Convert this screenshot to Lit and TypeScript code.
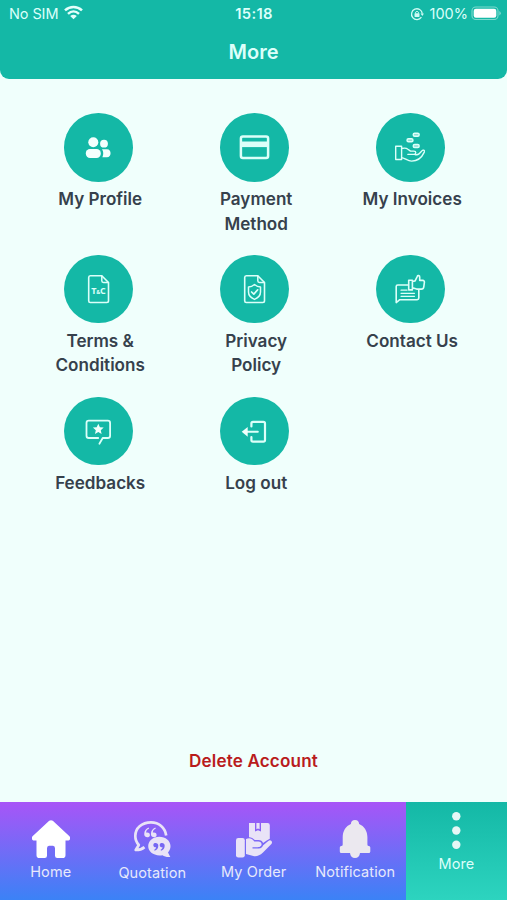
import { LitElement, html, css, svg } from "lit";
import { customElement } from "lit/decorators.js";

const profile = svg`<g fill="#f4fffd" stroke="none"><circle cx="29.3" cy="29.3" r="5"/><circle cx="40" cy="30.7" r="3.9"/><rect x="21.8" y="36" width="15" height="9" rx="4.2"/><path d="M38 36.300H43c4.800 0 4.800 8 0 8h-4.600c1.300-3 1.100-5.800-.4-8Z"/></g>`;

const card = svg`<rect x="20.900" y="23.400" width="27.200" height="21.600" rx="2" stroke-width="2.500"/><path class="band" d="M21 31.300h27" stroke-width="5.600"/>`;

const invoices = svg`<g stroke-width="1.400"><g fill="#8ce0d6"><rect x="37.200" y="20.300" width="6" height="3" rx="1.500"/><rect x="31" y="25.700" width="6" height="3" rx="1.500"/><rect x="37.200" y="31.500" width="6" height="3" rx="1.500"/></g><path d="M19.700 33.200h5.900v13.300h-5.900ZM25.600 35.500c3-.8 4.500-.8 6.300.7l2.600 1.900h3.400c2.500 0 2.500 3.200 0 3.300h-6M25.600 44.600c3 .2 6 3.500 10 3.500 6 0 10-3.200 12.700-9 .7-1.900-1.300-2.600-2.500-1.200l-2.900 3c-1.500 1.300-3 .8-4.300.5"/></g>`;

const sheet = svg`<path d="M26.300 20.700h11.500l6.700 6.800v18.300q0 1.700-1.700 1.700H26.300q-1.600 0-1.600-1.700V22.400q0-1.700 1.600-1.700Z" stroke-width="1.600"/><path d="M37.800 20.900v4.800q0 1.700 1.700 1.700h4.800" stroke-width="1.500"/>`;

const terms = svg`${sheet}<g><text x="27.200" y="39.200">T</text><text x="32.300" y="39.200" class="amp">&amp;</text><text x="36" y="39.200">C</text></g>`;

const privacy = svg`${sheet}<path d="M34.500 29.500q2.800 2.400 6 2.400v5.200q0 4.900-6 7.300-6-2.400-6-7.300v-5.200q3.200 0 6-2.400Z" stroke-width="1.500"/><path d="m31.600 37 2.200 2.100 3.900-4.300" stroke-width="1.700"/>`;

const contact = svg`<path d="M32 30H21.800q-1.600 0-1.600 1.600v16l3.600-2.900h17.400q1.600 0 1.600-1.600v-8" stroke-width="1.600"/><path d="M25 35.200h6M25 38.300h13.500M25 41.300h13.500" stroke-width="1.200"/><path d="M32.700 25.200h3.700v9.700h-3.700ZM36.400 26.500l2.700-.6 2.200-4.600c.4-1.200 2.500-.8 2.400.7v3.400h3q1.900.2 1.700 2l-.6 4.500q-.3 2.200-2.500 2.200h-4.700l-4.200-1.300" stroke-width="1.600"/>`;

const feedback = svg`<path d="M34.200 41H24.800q-2.300 0-2.300-2.300V26q0-2.300 2.300-2.300h19q2.300 0 2.300 2.300v12.700q0 2.300-2.300 2.300H38.700l-3.300 5.700" stroke-width="1.800"/><path fill="#effffc" stroke="none" d="m34.300 26.700 1.600 3.500 3.800.4-2.900 2.600.8 3.800-3.300-1.900L31 37l.8-3.800-2.900-2.600 3.800-.4Z"/>`;

const logout = svg`<path d="M31.400 29.500v-3q0-1.600 1.600-1.600h10.400q1.600 0 1.600 1.600v16.600q0 1.600-1.600 1.600H33q-1.600 0-1.600-1.600v-3" stroke-width="2.200"/><path d="M26.500 34.800h11.300" stroke-width="2.100"/><path fill="#effffc" stroke="none" d="M21.700 34.800l6-4.900v9.800Z"/>`;

const items = [
  { label: "My Profile", art: profile },
  { label: "Payment Method", art: card },
  { label: "My Invoices", art: invoices },
  { label: "Terms & Conditions", art: terms },
  { label: "Privacy Policy", art: privacy },
  { label: "Contact Us", art: contact },
  { label: "Feedbacks", art: feedback },
  { label: "Log out", art: logout },
];

const home = svg`<path fill="#fff" d="M17.200.8q1.800-1.300 3.600 0l16.400 15.300c2 2 .8 4.300-1.400 4.500h-2.300v14.600q0 2.800-2.800 2.800h-5.400q-2.300 0-2.300-2.300v-7.400q0-2.500-2-2.500h-4q-2 0-2 2.500v7.400q0 2.300-2.300 2.300H7.300q-2.800 0-2.800-2.800V20.600H2.200C0 20.400-1.200 18.100.8 16.100Z"/>`;

const quote = svg`<path fill="none" stroke="#e9e3f7" stroke-width="2.700" stroke-linejoin="round" d="M33.200 15.500C32 7.400 26 2.400 18 2.400 8.700 2.400 2.300 8.300 2.300 16c0 3.900 1.200 6.500 3.500 9L2.700 30c4 .1 6.600-1.100 8.800-2.900"/><g fill="#e9e3f7"><path d="M16 8.700c-2.400 1-3 2.500-2.800 4 2.600-.4 3.900.8 3.700 2.700-.3 2.600-5.700 2.600-5.700-1.200 0-3.400 1.900-5.600 4.500-6.600ZM22.700 8.700c-2.400 1-3 2.500-2.800 4 2.600-.4 3.900.8 3.700 2.700-.3 2.600-5.700 2.600-5.700-1.200 0-3.400 1.900-5.600 4.500-6.600Z"/><path d="M26.300 16.700c6.300 0 11.200 4.100 11.200 9.400 0 2.700-.9 4.700-2.500 6.300l2.300 4.500c-3.500.2-6-.3-7.800-1.700-8.300 1.300-14.300-3.100-14.300-9.100 0-5.300 4.900-9.400 11.100-9.400Z"/></g><g fill="#7667f3"><path d="M20.900 23.500c2.300-1 4.400 0 4.400 2.300 0 2.600-1.400 4.200-3.700 5l-.4-1c1.300-.7 1.900-1.500 1.900-2.500-2.600.2-3.400-2.300-2.200-3.800ZM27.300 23.500c2.300-1 4.400 0 4.400 2.300 0 2.600-1.400 4.200-3.700 5l-.4-1c1.300-.7 1.900-1.500 1.900-2.500-2.600.2-3.400-2.300-2.200-3.800Z"/></g>`;

const order = svg`<g fill="#e9e3f7"><rect x="1" y="18" width="8.800" height="19.500" rx="2.300"/><path d="M14 3h6v8.600l3-1.400 3 1.400V3h6.500q2.300 0 2.300 2.300v13.500q-2.800 1.200-6.700 4.300-1.200-3.300-5-3.100h-3.300q-3.200-3.300-5.800-2.700V3Z"/><path d="M21.400 3h3.200v6.300L23 8.500l-1.600.8Z"/><path d="M11 19.100c3.500-1.800 5.900-.7 8.300 2.300h4c2.800 0 4.300 2.500 2.600 4.700-.9 1-2 1.100-3.200 1.100h-5.200v1.300h6.200c2.700 0 3.500-1.700 4.500-3.200l5.100-4.300c2.300-2.100 4.900.8 3.100 3L28 32.500q-5 4.700-9.700 3.600L11 34Z"/></g>`;

const bell = svg`<path fill="#ebe8ef" d="M19 0c2.600 0 4 1.600 4.100 4 5.100 2 8.300 7.300 8.300 13v7.500q0 1.500 1.500 1.500 1.400 0 1.400 1.500v4q0 1.500-1.500 1.500H24c-.4 3.300-2.200 5-5 5s-4.600-1.700-5-5H5.300q-1.500 0-1.500-1.500v-4Q3.800 26 5.200 26q1.500 0 1.500-1.500V17c0-5.700 3.100-11 8.200-13C15 1.600 16.400 0 19 0Z"/>`;

const dots = svg`<g fill="#e6f7f6"><circle cx="18.300" cy="4.200" r="4.200"/><circle cx="18.300" cy="18.500" r="4.200"/><circle cx="18.300" cy="32.800" r="4.200"/></g>`;

const tabs = [
  { label: "Home", art: home, cls: "" },
  { label: "Quotation", art: quote, cls: "low" },
  { label: "My Order", art: order, cls: "" },
  { label: "Notification", art: bell, cls: "" },
  { label: "More", art: dots, cls: "active" },
];

@customElement("app-root")
export class AppRoot extends LitElement {
  static styles = css`
    :host {
      display: flex;
      flex-direction: column;
      height: 900px;
      overflow: hidden;
      background: #f0fffc;
      font-family: Inter, "Liberation Sans", sans-serif;
    }
    svg { display: block; flex: none; }
    header {
      height: 78.500px;
      box-sizing: border-box;
      background: #14b8a6;
      border-radius: 0 0 9px 9px;
      color: #dcfffa;
    }
    .status {
      display: grid;
      grid-template-columns: 1fr auto 1fr;
      align-items: center;
      height: 27px;
      padding: 0 5px 0 9px;
      font-size: 14.500px;
    }
    .side { display: flex; align-items: center; }
    .sim { letter-spacing: -0.100px; }
    .wifi { margin-left: 6px; margin-top: -2px; }
    .time { font-weight: 600; font-size: 14.800px; letter-spacing: 0.300px; margin-right: 3px; }
    .right { justify-content: flex-end; }
    .lock { margin-right: 6px; }
    .battery { margin-left: 3px; }
    h1 {
      margin: 9px 0 0;
      text-align: center;
      font-size: 20px;
      line-height: 32px;
      font-weight: 600;
    }
    .grid {
      display: grid;
      grid-template-columns: repeat(3, 156px);
      grid-auto-rows: 141.800px;
      padding: 34.500px 0 0 22.200px;
      flex: 1;
      align-content: start;
    }
    .item { display: flex; flex-direction: column; align-items: center; }
    .disc {
      width: 68.600px;
      height: 68.600px;
      margin-right: 3.800px;
      border-radius: 50%;
      background: #14b8a6;
    }
    .disc svg { fill: none; stroke: #dcfff9; stroke-linejoin: round; stroke-linecap: round; }
    .disc svg .band { stroke-linecap: butt; }
    .disc svg text { fill: #dcfff9; stroke: none; font: 700 9px "Open Sans", sans-serif; }
    .disc svg .amp { font-size: 5.500px; }
    .label {
      margin-top: 5.600px;
      width: 110px;
      text-align: center;
      color: #36414c;
      font-size: 17.100px;
      line-height: 24.400px;
      font-weight: 600;
    }
    .delete {
      text-align: center;
      color: #b91c1c;
      font-size: 17.100px;
      letter-spacing: 0.150px;
      line-height: 24px;
      font-weight: 600;
      margin-bottom: 29px;
    }
    nav {
      display: grid;
      grid-template-columns: repeat(4, 101.500px) 1fr;
      height: 98px;
      background: linear-gradient(#a855f7, #3b82f6);
      color: #e7e9fb;
    }
    .tab {
      display: flex;
      flex-direction: column;
      align-items: center;
      padding-top: 18px;
      font-size: 14.500px;
      line-height: 20px;
      letter-spacing: 0.100px;
    }
    .tab span { margin-top: 4px; white-space: nowrap; }
    .tab.low span { margin-top: 5px; }
    .tab.active {
      padding-top: 10px;
      background: linear-gradient(#14b8a6, #2dd4bf);
      color: #dcfffa;
    }
    .tab.active span { margin-top: 3.500px; }
  `;

  render() {
    return html`
      <header>
        <div class="status">
          <div class="side">
            <span class="sim">No SIM</span>
            <svg class="wifi" width="19" height="15" viewBox="0 0 19 15" fill="none" stroke="#e4fffb" stroke-width="2.500">
              <path d="M1 5.400c5-4.600 12-4.600 17 0M4 8.800c3.300-3 7.700-3 11 0" />
              <path d="M9.500 14.300 6.200 11q3.300-2.600 6.600 0Z" fill="#e4fffb" stroke="none" />
            </svg>
          </div>
          <div class="time">15:18</div>
          <div class="side right">
            <svg class="lock" width="14" height="14" viewBox="0 0 14 14" fill="none" stroke="#cffaf4" stroke-width="1.300">
              <path d="M11.400 10.200A5.400 5.400 0 1 1 12.300 6.600" />
              <path d="m10.500 6.600 1.900 2.300 1.500-2.500Z" fill="#cffaf4" stroke="none" />
              <path d="M5.500 6.500V5.300q1.500-2 3 0v1.200" stroke-width="1" />
              <rect x="4.500" y="6.200" width="5" height="3.700" rx=".6" fill="#cffaf4" stroke="none" />
            </svg>
            <span>100%</span>
            <svg class="battery" width="31" height="15" viewBox="0 0 31 15">
              <rect x="1" y="1" width="26" height="12.500" rx="3.800" fill="none" stroke="#7cd9ce" stroke-width="1.100" />
              <rect x="2.700" y="2.700" width="22.600" height="9.100" rx="2.200" fill="#fff" />
              <path d="M28.300 5v4.500q1.500-.7 1.500-2.200T28.300 5Z" fill="#7cd9ce" />
            </svg>
          </div>
        </div>
        <h1>More</h1>
      </header>
      <main class="grid">
        ${items.map(
          (i) => html`<div class="item">
            <div class="disc"><svg width="69" height="69" viewBox="0 0 69 69">${i.art}</svg></div>
            <div class="label">${i.label}</div>
          </div>`
        )}
      </main>
      <div class="delete">Delete Account</div>
      <nav>
        ${tabs.map(
          (t) => html`<div class="tab ${t.cls}">
            <svg width="38" height="38" viewBox="0 0 38 38">${t.art}</svg>
            <span>${t.label}</span>
          </div>`
        )}
      </nav>
    `;
  }
}
